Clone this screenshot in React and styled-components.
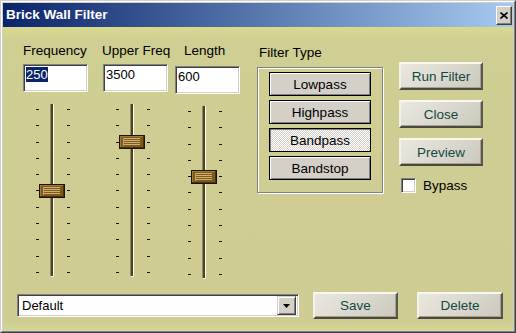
import React from "react";
import styled, { createGlobalStyle, css } from "styled-components";

const TICKS = 11;
const TICK_STEP = 16.3;

const GlobalStyle = createGlobalStyle`
  html, body {
    margin: 0;
    padding: 0;
    background: #ffffff;
  }
  body {
    font-family: "Liberation Sans", Arial, sans-serif;
  }
`;

export default function App() {
  return (
    <>
      <GlobalStyle />
      <Window>
        <Frame>
          <TitleBar>
            <Title>Brick Wall Filter</Title>
            <CloseButton>
              <svg width="8" height="7" viewBox="0 0 8 7">
                <path
                  d="M0.5 0.5 L7.5 6.5 M7.5 0.5 L0.5 6.5"
                  stroke="#000"
                  strokeWidth="1.6"
                />
              </svg>
            </CloseButton>
          </TitleBar>
          <Body>
            <Top>
              <SliderColumn $left={20}>
                <Label>Frequency</Label>
                <TextBox>
                  <Selected>250</Selected>
                </TextBox>
                <Slider value={5} />
              </SliderColumn>
              <SliderColumn $left={15}>
                <Label $indent={-1}>Upper Freq</Label>
                <TextBox>3500</TextBox>
                <Slider value={2} />
              </SliderColumn>
              <SliderColumn $left={7}>
                <Label $indent={9}>Length</Label>
                <TextBox $shift={2}>600</TextBox>
                <Slider value={4} />
              </SliderColumn>
              <FilterColumn>
                <Label $indent={2}>Filter Type</Label>
                <GroupBox>
                  <FilterButton>Lowpass</FilterButton>
                  <FilterButton>Highpass</FilterButton>
                  <FilterButton $checked>Bandpass</FilterButton>
                  <FilterButton>Bandstop</FilterButton>
                </GroupBox>
              </FilterColumn>
              <ActionColumn>
                <ActionButton $w={84} $h={28}>Run Filter</ActionButton>
                <ActionButton $w={84} $h={28}>Close</ActionButton>
                <ActionButton $w={84} $h={28}>Preview</ActionButton>
                <CheckRow>
                  <CheckBox />
                  <span>Bypass</span>
                </CheckRow>
              </ActionColumn>
            </Top>
            <BottomRow>
              <Combo>
                <ComboText>Default</ComboText>
                <ComboArrow>
                  <svg width="7" height="4" viewBox="0 0 7 4">
                    <path d="M0 0 H7 L3.5 4 Z" fill="#000" />
                  </svg>
                </ComboArrow>
              </Combo>
              <ActionButton $w={85} $h={27}>Save</ActionButton>
              <ActionButton $w={86} $h={27} $gap={19}>Delete</ActionButton>
            </BottomRow>
          </Body>
        </Frame>
      </Window>
    </>
  );
}

const Slider = ({ value }) => {
  const ticks = Array.from({ length: TICKS }, (_, i) => <Tick key={i} />);
  return (
    <SliderWrap>
      <TickColumn>{ticks}</TickColumn>
      <Track>
        <ThumbHolder style={{ top: Math.round(value * TICK_STEP - 1.5) }}>
          <svg width="26" height="14" viewBox="0 0 26 14">
            <rect x="0" y="0" width="26" height="14" fill="#1e1404" />
            <rect x="1" y="1" width="24" height="12" fill="#4a330c" />
            <rect x="1" y="1" width="23" height="11" fill="#a27a36" />
            <rect x="2" y="2" width="22" height="10" fill="#7a5a1e" />
            <rect x="4" y="3" width="1" height="8" fill="#c6a060" />
            <rect x="5" y="3" width="16" height="1" fill="#d2b070" />
            <rect x="5" y="5" width="16" height="1" fill="#d2b070" />
            <rect x="5" y="7" width="16" height="1" fill="#d2b070" />
            <rect x="5" y="9" width="16" height="1" fill="#d2b070" />
          </svg>
        </ThumbHolder>
      </Track>
      <TickColumn $right>{ticks}</TickColumn>
    </SliderWrap>
  );
};

const Window = styled.div`
  width: 516px;
  height: 333px;
  box-sizing: border-box;
  border: 1px solid;
  border-color: #d4d0c8 #404040 #404040 #d4d0c8;
  display: flex;
`;

const Frame = styled.div`
  flex: 1;
  display: flex;
  flex-direction: column;
  border: 1px solid;
  border-color: #ffffff #808080 #808080 #ffffff;
  padding: 1px;
  background: #d4d0c8;
`;

const TitleBar = styled.div`
  height: 24px;
  display: flex;
  align-items: center;
  justify-content: space-between;
  padding: 0 1px 0 3px;
  background: linear-gradient(to right, #0a246a, #a6caf0);
`;

const Title = styled.div`
  color: #ffffff;
  font-weight: bold;
  font-size: 13.5px;
  line-height: 16px;
`;

const CloseButton = styled.div`
  width: 16px;
  height: 19px;
  box-sizing: border-box;
  display: grid;
  place-content: center;
  background: #d4d0c8;
  border: 1px solid;
  border-color: #ffffff #404040 #404040 #ffffff;
  box-shadow: inset -1px -1px 0 #808080;
`;

const Body = styled.div`
  flex: 1;
  display: flex;
  flex-direction: column;
  padding: 16px 0 11px;
  background: linear-gradient(
    to bottom,
    #d9da8f 0,
    #cfce93 14px,
    #cecc93 calc(100% - 10px),
    #d5d58f 100%
  );
`;

const Top = styled.div`
  display: flex;
  align-items: flex-start;
`;

const SliderColumn = styled.div`
  width: 65px;
  flex-shrink: 0;
  display: flex;
  flex-direction: column;
  margin-left: ${({ $left }) => $left}px;
`;

const Label = styled.div`
  font-size: 13.5px;
  line-height: 16px;
  height: 16px;
  color: #000000;
  white-space: nowrap;
  margin-left: ${({ $indent = 0 }) => $indent}px;
`;

const TextBox = styled.div`
  width: 65px;
  height: 28px;
  box-sizing: border-box;
  margin-top: ${({ $shift = 0 }) => 5 + $shift}px;
  background: #ffffff;
  border: 1px solid;
  border-color: #808080 #ffffff #ffffff #808080;
  box-shadow: inset 1px 1px 0 #404040, inset -1px -1px 0 #d4d0c8;
  font-size: 13px;
  line-height: 15px;
  padding: 2px 1px 0 2px;
  color: #000000;
`;

const Selected = styled.span`
  background: #0a246a;
  color: #ffffff;
`;

const SliderWrap = styled.div`
  display: flex;
  height: 173px;
  margin: 12px 0 0 13px;
`;

const TickColumn = styled.div`
  display: flex;
  flex-direction: column;
  justify-content: space-between;
  padding: 5px 0 4px;
  margin-left: ${({ $right }) => ($right ? 13 : 0)}px;
`;

const Tick = styled.div`
  width: 3px;
  height: 1px;
  background: #141414;
`;

const Track = styled.div`
  position: relative;
  width: 4px;
  margin-left: 11px;
  box-sizing: border-box;
  background: #56400f;
  border-left: 1px solid #8a8a80;
  border-right: 1px solid #ffffff;
  border-bottom: 1px solid #ffffff;
  border-radius: 1px 1px 2px 2px;
`;

const ThumbHolder = styled.div`
  position: absolute;
  left: -12px;
  width: 26px;
  height: 14px;
  line-height: 0;
`;

const FilterColumn = styled.div`
  display: flex;
  flex-direction: column;
  margin: 2px 0 0 17px;
`;

const GroupBox = styled.div`
  width: 126px;
  height: 126px;
  box-sizing: border-box;
  margin-top: 6px;
  padding: 4px 11px;
  display: flex;
  flex-direction: column;
  gap: 4px;
  border: 1px solid #808080;
  box-shadow: inset 1px 1px 0 #ffffff, 1px 1px 0 #ffffff;
`;

const FilterButton = styled.div`
  height: 24px;
  box-sizing: border-box;
  display: grid;
  place-content: center;
  font-size: 13.5px;
  color: #000000;
  border: 1px solid #000000;
  box-shadow: inset 1px 1px 0 #ffffff, inset -1px -1px 0 #808080;
  background: #d4d0c8;
  ${({ $checked }) =>
    $checked &&
    css`
      background: repeating-conic-gradient(#ffffff 0 25%, #d4d0c8 0 50%) 0 0 /
        2px 2px;
      box-shadow: inset 1px 1px 0 #808080;
    `}
`;

const ActionColumn = styled.div`
  display: flex;
  flex-direction: column;
  gap: 10px;
  margin: 19px 0 0 16px;
`;

const ActionButton = styled.div`
  width: ${({ $w }) => $w}px;
  height: ${({ $h }) => $h}px;
  box-sizing: border-box;
  margin-left: ${({ $gap = 0 }) => $gap}px;
  display: grid;
  place-content: center;
  font-size: 13.5px;
  color: #12493f;
  border: 2px solid;
  border-color: #f8f7f0 #5a574e #4a4840 #f2f1ea;
  box-shadow: inset -1px -1px 0 #a3a094;
  background: linear-gradient(135deg, #e9e7de 0%, #dad8ce 55%, #cbc8bb 100%);
`;

const CheckRow = styled.div`
  display: flex;
  align-items: center;
  gap: 7px;
  margin: 2px 0 0 2px;
  font-size: 13.5px;
  color: #000000;
`;

const CheckBox = styled.div`
  width: 15px;
  height: 15px;
  box-sizing: border-box;
  background: #ffffff;
  border: 1px solid;
  border-color: #808080 #ffffff #ffffff #808080;
  box-shadow: inset 1px 1px 0 #404040, inset -1px -1px 0 #d4d0c8;
`;

const BottomRow = styled.div`
  margin-top: auto;
  display: flex;
  align-items: center;
  padding-left: 14px;
`;

const Combo = styled.div`
  width: 282px;
  height: 23px;
  box-sizing: border-box;
  margin-right: 14px;
  display: flex;
  align-items: center;
  background: #ffffff;
  border: 1px solid;
  border-color: #808080 #ffffff #ffffff #808080;
  box-shadow: inset 1px 1px 0 #404040, inset -1px -1px 0 #d4d0c8;
  padding: 2px;
`;

const ComboText = styled.div`
  flex: 1;
  font-size: 13px;
  color: #000000;
  padding-left: 2px;
`;

const ComboArrow = styled.div`
  width: 19px;
  height: 19px;
  box-sizing: border-box;
  display: grid;
  place-content: center;
  background: #d4d0c8;
  border: 1px solid;
  border-color: #d4d0c8 #404040 #404040 #d4d0c8;
  box-shadow: inset 1px 1px 0 #ffffff, inset -1px -1px 0 #808080;
`;
